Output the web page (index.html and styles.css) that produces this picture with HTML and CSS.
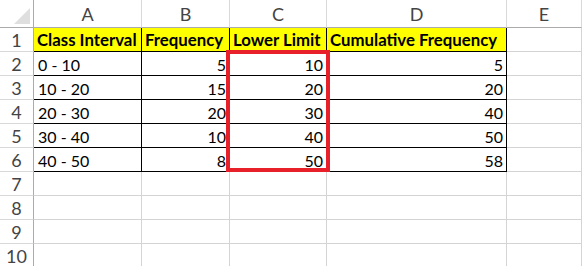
FILE: index.html
```html
<!DOCTYPE html>
<html lang="en">
<head>
    <meta charset="UTF-8">
    <title>Lower Limit</title>
    <link rel="stylesheet" href="styles.css">
</head>
<body>
    <div class="sheet">
        <div class="grid">
            <!-- column headers -->
            <div class="corner"><span class="tri"></span></div>
            <div class="colhead">A</div>
            <div class="colhead">B</div>
            <div class="colhead">C</div>
            <div class="colhead">D</div>
            <div class="colhead">E</div>

            <!-- row 1 -->
            <div class="rowhead">1</div>
            <div class="cell data head">Class Interval</div>
            <div class="cell data head">Frequency</div>
            <div class="cell data head">Lower Limit</div>
            <div class="cell data head">Cumulative Frequency</div>
            <div class="cell"></div>

            <!-- row 2 -->
            <div class="rowhead">2</div>
            <div class="cell data">0 - 10</div>
            <div class="cell data num">5</div>
            <div class="cell data num">10</div>
            <div class="cell data num">5</div>
            <div class="cell"></div>

            <!-- row 3 -->
            <div class="rowhead">3</div>
            <div class="cell data">10 - 20</div>
            <div class="cell data num">15</div>
            <div class="cell data num">20</div>
            <div class="cell data num">20</div>
            <div class="cell"></div>

            <!-- row 4 -->
            <div class="rowhead">4</div>
            <div class="cell data">20 - 30</div>
            <div class="cell data num">20</div>
            <div class="cell data num">30</div>
            <div class="cell data num">40</div>
            <div class="cell"></div>

            <!-- row 5 -->
            <div class="rowhead">5</div>
            <div class="cell data">30 - 40</div>
            <div class="cell data num">10</div>
            <div class="cell data num">40</div>
            <div class="cell data num">50</div>
            <div class="cell"></div>

            <!-- row 6 -->
            <div class="rowhead">6</div>
            <div class="cell data">40 - 50</div>
            <div class="cell data num">8</div>
            <div class="cell data num">50</div>
            <div class="cell data num">58</div>
            <div class="cell"></div>

            <!-- empty rows -->
            <div class="rowhead">7</div>
            <div class="cell"></div><div class="cell"></div><div class="cell"></div><div class="cell"></div><div class="cell"></div>
            <div class="rowhead">8</div>
            <div class="cell"></div><div class="cell"></div><div class="cell"></div><div class="cell"></div><div class="cell"></div>
            <div class="rowhead">9</div>
            <div class="cell"></div><div class="cell"></div><div class="cell"></div><div class="cell"></div><div class="cell"></div>
            <div class="rowhead">10</div>
            <div class="cell"></div><div class="cell"></div><div class="cell"></div><div class="cell"></div><div class="cell"></div>
        </div>

        <!-- highlight around Lower Limit values -->
        <div class="highlight"></div>
    </div>
</body>
</html>
```

FILE: styles.css
```css
body {
    margin: 0;
    background: #fff;
    font-family: 'Lato', 'Liberation Sans', sans-serif;
    overflow: hidden;
}
.sheet {
    position: relative;
    width: 582px;
    height: 266px;
}
.grid {
    display: grid;
    grid-template-columns: 34px 108px 88px 97px 180px 1fr;
    grid-template-rows: 28px repeat(10, 24px);
}
.grid > div {
    box-sizing: border-box;
    display: flex;
    align-items: flex-end;
    white-space: nowrap;
    overflow: hidden;
}
.corner {
    position: relative;
    border-right: 1px solid #ababab;
    border-bottom: 1px solid #ababab;
}
.tri {
    position: absolute;
    right: 3px;
    bottom: 3px;
    width: 0;
    height: 0;
    border-left: 16px solid transparent;
    border-bottom: 16px solid #dfdfdf;
}
.colhead {
    justify-content: center;
    color: #444;
    font-size: 18px;
    padding-bottom: 2px;
    border-right: 1px solid #d9d9d9;
    border-bottom: 1px solid #ababab;
}
.rowhead {
    justify-content: center;
    color: #444;
    font-size: 18px;
    padding-bottom: 0;
    border-right: 1px solid #ababab;
    border-bottom: 1px solid #d9d9d9;
}
.cell {
    color: #000;
    font-size: 16px;
    padding: 0 3px 1px 4px;
    border-right: 1px solid #d4d4d4;
    border-bottom: 1px solid #d4d4d4;
}
.cell.data {
    border-right-color: #000;
    border-bottom-color: #000;
}
.cell.head {
    background: #ffff00;
    font-weight: bold;
    font-size: 16.8px;
    padding-left: 3px;
}
.cell.num {
    justify-content: flex-end;
}
.highlight {
    position: absolute;
    left: 226px;
    top: 50px;
    width: 104px;
    height: 122px;
    box-sizing: border-box;
    border: 4px solid #e8202a;
}
```
